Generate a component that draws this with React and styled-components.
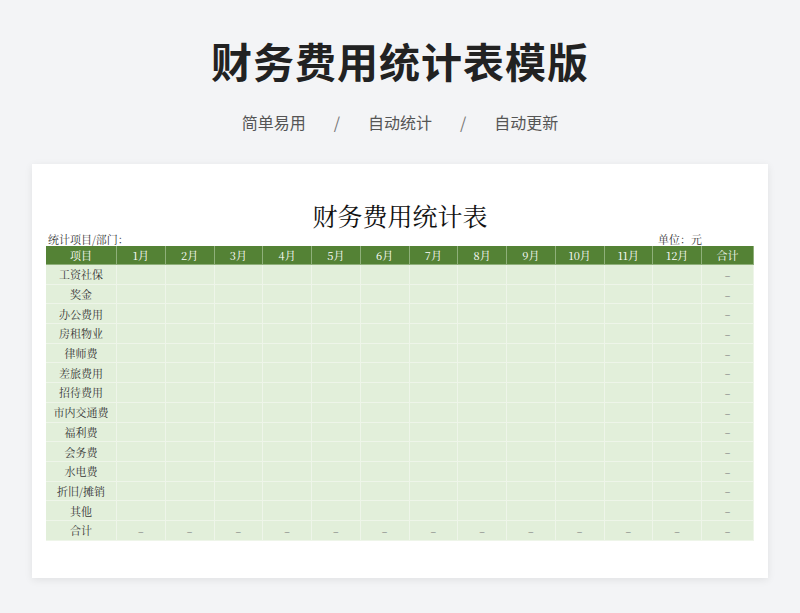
import React from "react";
import styled, { createGlobalStyle } from "styled-components";

const G = createGlobalStyle`
  body{margin:0;background:#f3f4f6;font-family:"Noto Sans CJK SC","Noto Sans",sans-serif;}
`;
const Page = styled.div`width:800px;height:613px;display:flex;flex-direction:column;align-items:center;`;
const Title = styled.h1`margin:33px 0 0;font-size:41px;line-height:54px;font-weight:700;color:#222;letter-spacing:1px;`;
const Sub = styled.div`margin-top:24px;font-size:16px;line-height:22px;color:#555;display:flex;gap:22px;`;
const Slash = styled.span`color:#777;padding:0 6px;`;
const Card = styled.div`margin-top:31px;width:736px;height:414px;background:#fff;box-shadow:0 2px 8px rgba(0,0,0,0.08);padding:0 14px;box-sizing:border-box;display:flex;flex-direction:column;font-family:"Noto Serif CJK SC","Noto Sans CJK SC",serif;`;
const STitle = styled.div`text-align:center;margin-top:34px;font-size:25px;line-height:34px;color:#111;`;
const Meta = styled.div`display:flex;justify-content:space-between;font-size:11px;line-height:14px;color:#333;padding:0 52px 0 2px;`;
const Table = styled.div`display:grid;grid-template-columns:71px repeat(12,48.75px) 52px;width:708px;`;
const H = styled.div`background:#548235;color:#fff;font-size:11px;height:19px;display:flex;align-items:center;justify-content:center;border-right:1px solid #8fb07a;border-bottom:1px solid #8fb07a;box-sizing:border-box;`;
const C = styled.div`background:#e2efda;height:19.7px;box-sizing:border-box;border-right:1px solid #eef5e9;border-bottom:1px solid #eef5e9;font-size:11px;color:#333;display:flex;align-items:center;justify-content:center;`;
const Dash = styled.span`color:#777;font-size:10px;`;

const rows=["工资社保","奖金","办公费用","房租物业","律师费","差旅费用","招待费用","市内交通费","福利费","会务费","水电费","折旧/摊销","其他","合计"];
const heads=["项目",...Array.from({length:12},(_,i)=>`${i+1}月`),"合计"];

export default function App(){
  return (<Page><G/>
    <Title>财务费用统计表模版</Title>
    <Sub><span>简单易用</span><Slash>/</Slash><span>自动统计</span><Slash>/</Slash><span>自动更新</span></Sub>
    <Card>
      <STitle>财务费用统计表</STitle>
      <Meta><span>统计项目/部门：</span><span>单位：元</span></Meta>
      <Table>
        {heads.map(h=><H key={h}>{h}</H>)}
        {rows.map((r,ri)=>(
          <React.Fragment key={r}>
            <C>{r}</C>
            {Array.from({length:12},(_,i)=><C key={i}>{ri===rows.length-1?<Dash>–</Dash>:null}</C>)}
            <C><Dash>–</Dash></C>
          </React.Fragment>
        ))}
      </Table>
    </Card>
  </Page>);
}
